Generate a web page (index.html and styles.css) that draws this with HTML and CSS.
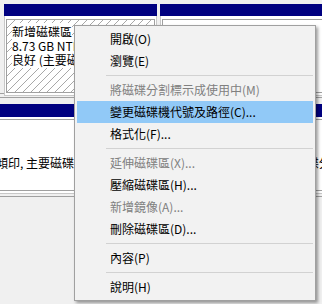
FILE: index.html
```html
<!DOCTYPE html>
<html lang="zh-Hant">
<head>
<meta charset="utf-8">
<title>磁碟管理</title>
<link rel="stylesheet" href="styles.css">
</head>
<body>
<div class="view">
  <div class="disk disk-top">
    <div class="part part-a">
      <div class="cap"></div>
      <div class="pbody">
        <div class="box hatch">
          <div class="ln"><span>新增磁碟區</span></div>
          <div class="ln"><span>8.73 GB NTFS</span></div>
          <div class="ln"><span>良好 (主要磁碟分割)</span></div>
        </div>
      </div>
    </div>
    <div class="part part-b">
      <div class="cap"></div>
      <div class="pbody">
        <div class="box"></div>
      </div>
    </div>
  </div>
  <div class="disk disk-mid">
    <div class="part part-c">
      <div class="cap cap-tall"></div>
      <div class="pbody">
        <div class="box box-tall">
          <div class="ln"></div>
          <div class="ln"></div>
          <div class="ln">傾印, 主要磁碟分割)</div>
        </div>
      </div>
    </div>
    <div class="part part-d">
      <div class="cap cap-tall"></div>
      <div class="pbody">
        <div class="box box-tall">
          <div class="ln"></div>
          <div class="ln"></div>
          <div class="ln">良好 (主要磁碟分割)</div>
        </div>
      </div>
    </div>
  </div>
  <div class="disk-rest"></div>
</div>

<div class="menu">
  <div class="item">開啟(O)</div>
  <div class="item">瀏覽(E)</div>
  <div class="sep"></div>
  <div class="item disabled">將磁碟分割標示成使用中(M)</div>
  <div class="item hot">變更磁碟機代號及路徑(C)...</div>
  <div class="item">格式化(F)...</div>
  <div class="sep"></div>
  <div class="item disabled">延伸磁碟區(X)...</div>
  <div class="item">壓縮磁碟區(H)...</div>
  <div class="item disabled">新增鏡像(A)...</div>
  <div class="item">刪除磁碟區(D)...</div>
  <div class="sep"></div>
  <div class="item">內容(P)</div>
  <div class="sep"></div>
  <div class="item">說明(H)</div>
</div>
</body>
</html>
```

FILE: styles.css
```css
html, body {
  margin: 0;
  padding: 0;
}
body {
  width: 322px;
  height: 304px;
  overflow: hidden;
  background: #f0f0f0;
  font-family: "Noto Sans CJK TC", "Noto Sans", sans-serif;
  font-size: 12px;
  color: #000;
  position: relative;
}
.view {
  width: 322px;
  height: 304px;
  overflow: hidden;
}
.disk {
  display: flex;
  gap: 3px;
  box-sizing: border-box;
}
.disk-top {
  padding: 4px 0 1px 4px;
  height: 94px;
  border-bottom: 1px solid #a0a0a0;
}
.disk-mid {
  margin-top: 3px;
  padding-top: 6px;
  height: 96px;
  border-top: 1px solid #a0a0a0;
  border-bottom: 1px solid #a0a0a0;
}
.disk-rest {
  margin-top: 3px;
  border-top: 1px solid #a0a0a0;
  height: 100px;
}
.part {
  display: flex;
  flex-direction: column;
  flex: none;
}
.part-a { width: 153px; }
.part-b { width: 170px; }
.part-c { width: 249px; margin-left: -20px; }
.part-d { width: 120px; }
.cap {
  height: 12px;
  background: #000080;
  flex: none;
}
.cap-tall { height: 13px; }
.pbody {
  background: #fff;
  padding: 3px 1px 2px 1px;
  border: 1px solid #c8c8c8;
  border-top: 0;
}
.disk-mid .pbody { padding-top: 2px; }
.box {
  height: 67px;
  border: 1px solid #a0a0a0;
  background: #fff;
  padding: 5px 0 0 5px;
  box-sizing: content-box;
  overflow: hidden;
  white-space: nowrap;
  line-height: 14px;
}
.box-tall {
  height: 62px;
  padding-top: 8px;
  padding-left: 5px;
}
.part-c .box { padding-left: 13px; }
.hatch {
  background-color: #fff;
  background-image: linear-gradient(to bottom right, transparent calc(50% - 0.6px), #a8a8a8 calc(50% - 0.6px), #a8a8a8 calc(50% + 0.6px), transparent calc(50% + 0.6px));
  background-size: 8px 8px;
}
.ln {
  height: 14px;
}
.hatch .ln span {
  background: #fff;
}

.menu {
  position: absolute;
  left: 74px;
  top: 25px;
  width: 242px;
  box-sizing: border-box;
  background: #f2f2f2;
  border: 1px solid #a0a0a0;
  padding: 2px;
  box-shadow: 2px 2px 3px rgba(0, 0, 0, 0.38);
}
.item {
  height: 22px;
  line-height: 22px;
  padding-left: 33px;
  white-space: nowrap;
}
.item.disabled {
  color: #808080;
}
.item.hot {
  background: #91c9f7;
}
.sep {
  height: 1px;
  background: #d2d2d2;
  margin: 3px 0 3px 29px;
}
```
